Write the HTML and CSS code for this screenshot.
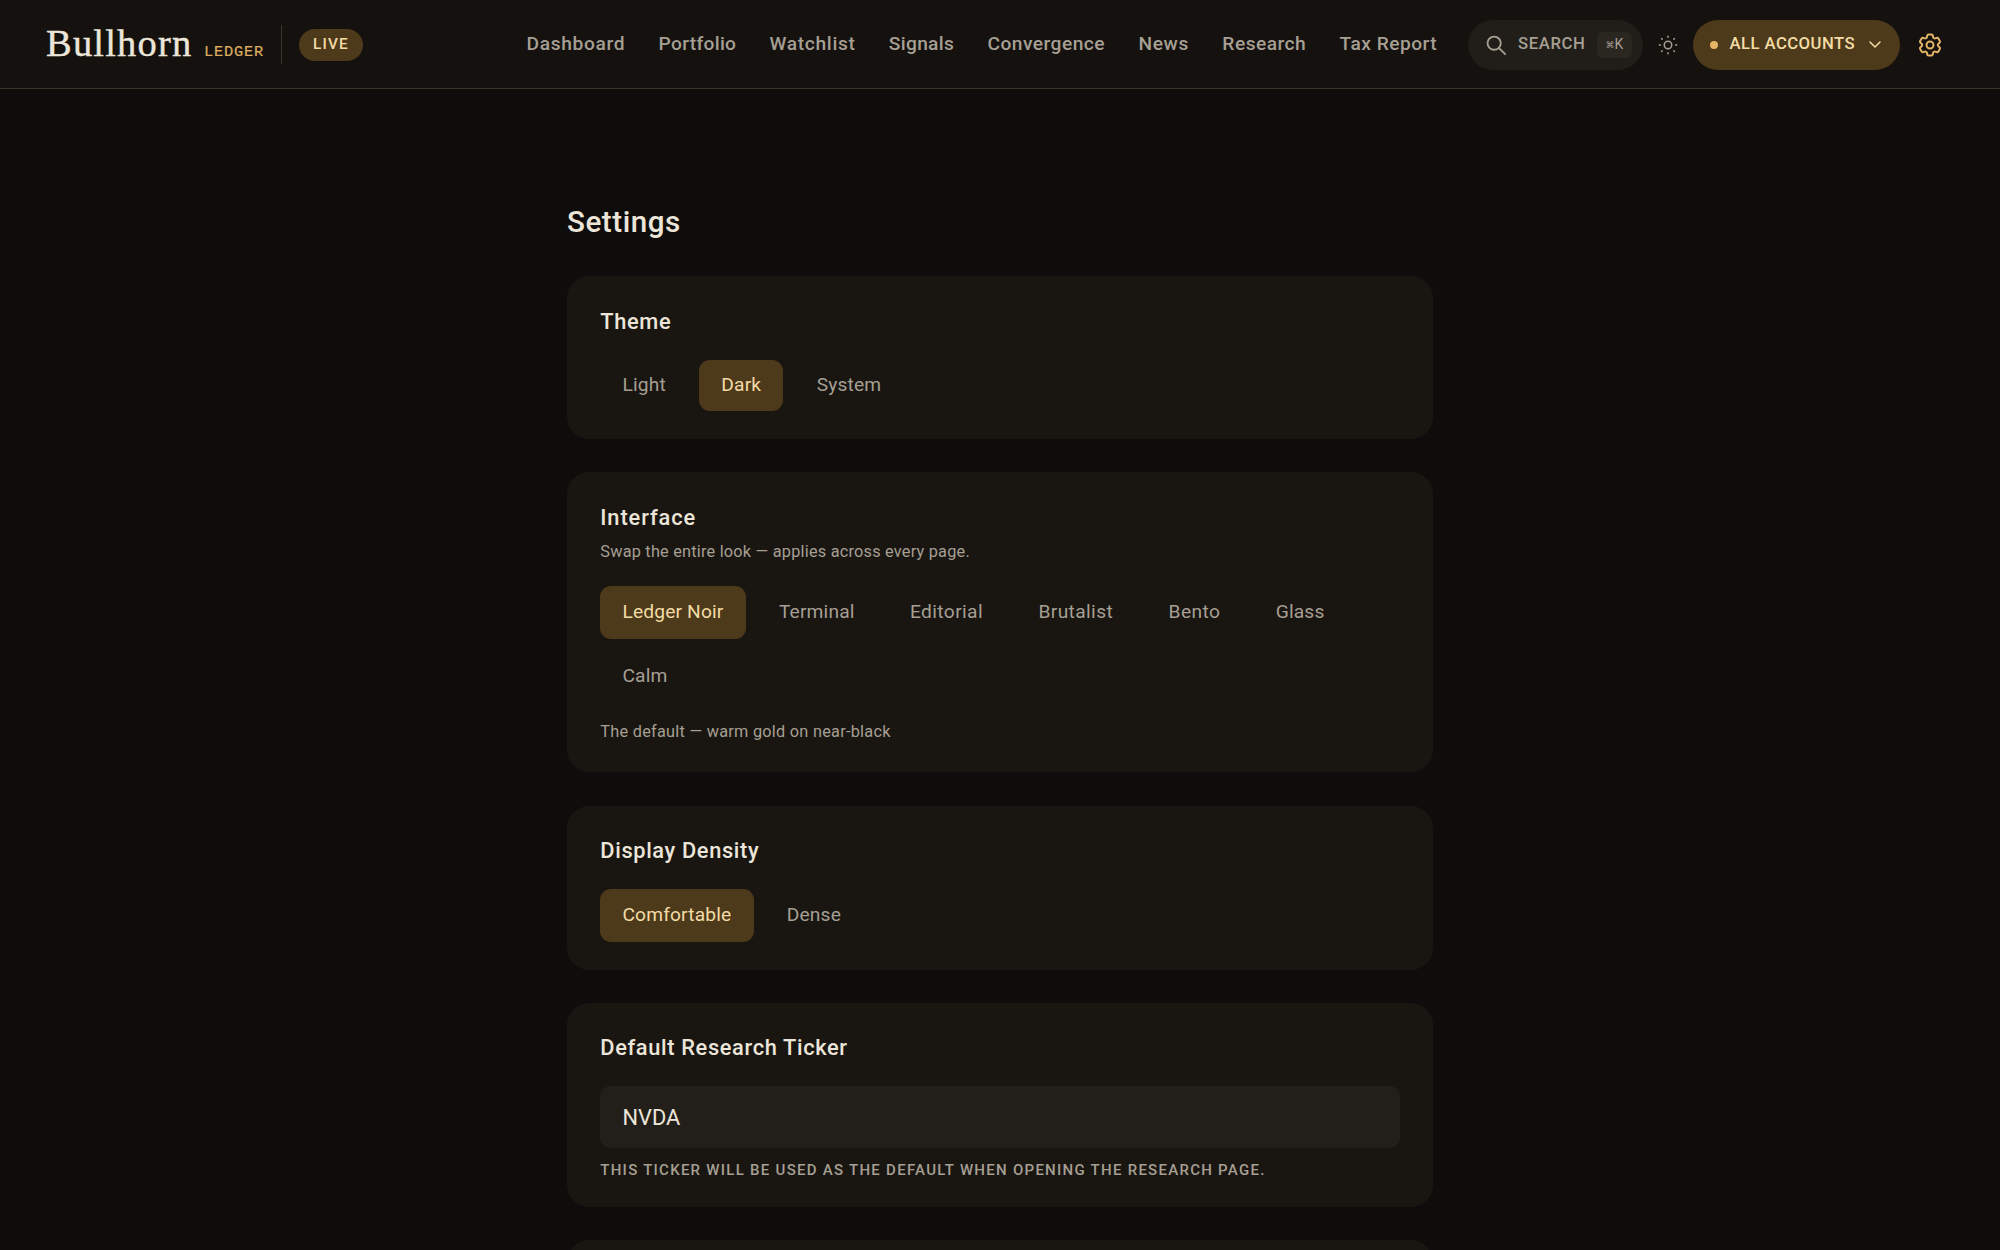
FILE: index.html
```
<!DOCTYPE html>
<html lang="en">
<head>
  <meta charset="UTF-8">
  <meta name="viewport" content="width=device-width, initial-scale=1.0">
  <title>Settings - Bullhorn Ledger</title>
  <link rel="stylesheet" href="styles.css">
</head>
<body>
  <header class="topbar">
    <div class="brand">
      <span class="brand-name">Bullhorn</span>
      <span class="brand-sub">LEDGER</span>
    </div>
    <span class="divider"></span>
    <span class="live">LIVE</span>

    <nav class="nav">
      <a class="wide">Dashboard</a>
      <a>Portfolio</a>
      <a class="wide">Watchlist</a>
      <a>Signals</a>
      <a class="mid">Convergence</a>
      <a class="wide">News</a>
      <a class="mid">Research</a>
      <a class="mid">Tax Report</a>
    </nav>

    <div class="search">
      <svg class="icon-search" viewBox="0 0 24 24"><circle cx="10" cy="10" r="7.2"/><path d="M15.3 15.3L22 22"/></svg>
      <span class="search-label">SEARCH</span>
      <kbd><span class="cmd">⌘</span>K</kbd>
    </div>

    <svg class="icon-sun" viewBox="0 0 24 24"><circle cx="12" cy="12" r="4.5"/><path d="M12 1.6v1.2M12 21.2v1.2M1.6 12h1.2M21.2 12h1.2M4.3 4.3l.7.7M19 19l.7.7M4.3 19.7l.7-.7M19 5l.7-.7"/></svg>

    <div class="accounts">
      <span class="dot"></span>
      <span class="accounts-label">ALL ACCOUNTS</span>
      <svg class="icon-chevron" viewBox="0 0 12 7"><path d="M1 1l5 5 5-5"/></svg>
    </div>

    <!-- six-tooth cog -->
    <svg class="icon-gear" viewBox="0 0 24 24"><path d="M9.594 3.94c.09-.542.56-.94 1.11-.94h2.593c.55 0 1.02.398 1.11.94l.213 1.281c.063.374.313.686.645.87.074.04.147.083.22.127.325.196.72.257 1.075.124l1.217-.456a1.125 1.125 0 0 1 1.37.49l1.296 2.247a1.125 1.125 0 0 1-.26 1.431l-1.003.827c-.293.241-.438.613-.43.992a7.723 7.723 0 0 1 0 .255c-.008.378.137.75.43.991l1.004.827c.424.35.534.955.26 1.43l-1.298 2.247a1.125 1.125 0 0 1-1.369.491l-1.217-.456c-.355-.133-.75-.072-1.076.124a6.47 6.47 0 0 1-.22.128c-.331.183-.581.495-.644.869l-.213 1.281c-.09.543-.56.94-1.11.94h-2.594c-.55 0-1.019-.398-1.11-.94l-.213-1.281c-.062-.374-.312-.686-.644-.87a6.52 6.52 0 0 1-.22-.127c-.325-.196-.72-.257-1.076-.124l-1.217.456a1.125 1.125 0 0 1-1.369-.49l-1.297-2.247a1.125 1.125 0 0 1 .26-1.431l1.004-.827c.292-.24.437-.613.43-.991a6.932 6.932 0 0 1 0-.255c.007-.38-.138-.751-.43-.992l-1.004-.827a1.125 1.125 0 0 1-.26-1.43l1.297-2.247a1.125 1.125 0 0 1 1.37-.491l1.216.456c.356.133.751.072 1.076-.124.072-.044.146-.086.22-.128.332-.183.582-.495.644-.869l.214-1.28Z"/><circle cx="12" cy="12" r="3"/></svg>
  </header>

  <main class="page">
    <h1>Settings</h1>

    <section class="card card-theme">
      <h2>Theme</h2>
      <div class="options">
        <button>Light</button>
        <button class="active">Dark</button>
        <button>System</button>
      </div>
    </section>

    <section class="card card-interface">
      <h2>Interface</h2>
      <p class="hint">Swap the entire look — applies across every page.</p>
      <div class="options">
        <button class="active">Ledger Noir</button>
        <button>Terminal</button>
        <button class="wide">Editorial</button>
        <button class="wide">Brutalist</button>
        <button class="wide">Bento</button>
        <button>Glass</button>
        <button>Calm</button>
      </div>
      <p class="hint hint-after">The default — warm gold on near-black</p>
    </section>

    <section class="card card-density">
      <h2>Display Density</h2>
      <div class="options">
        <button class="active">Comfortable</button>
        <button>Dense</button>
      </div>
    </section>

    <section class="card card-ticker">
      <h2>Default Research Ticker</h2>
      <div class="field">NVDA</div>
      <p class="caption">THIS TICKER WILL BE USED AS THE DEFAULT WHEN OPENING THE RESEARCH PAGE.</p>
    </section>

    <section class="card card-next"></section>
  </main>
</body>
</html>
```
FILE: styles.css
```
* {
  box-sizing: border-box;
}

html {
  overflow: hidden;
}

body {
  margin: 0;
  height: 100vh;
  overflow: hidden;
  background: #0e0d0b;
  color: #ece5d9;
  font-family: Roboto, sans-serif;
}

svg {
  display: block;
  flex: none;
  fill: none;
  stroke: currentColor;
  stroke-linecap: round;
  stroke-linejoin: round;
}

/* top bar */
.topbar {
  display: flex;
  align-items: center;
  height: 89px;
  padding: 1px 56px 0 46px;
  background: #14110e;
  border-bottom: 1px solid #39342a;
  white-space: nowrap;
}

.brand {
  display: flex;
  align-items: baseline;
  width: 235px;
  padding-bottom: 3px;
}

.brand-name {
  width: 158px;
  font-family: "Liberation Serif", serif;
  font-size: 38.5px;
  line-height: 50px;
  letter-spacing: 1.2px;
  -webkit-text-stroke: 0.4px currentColor;
}

.brand-sub {
  font-family: "Liberation Mono", monospace;
  font-size: 15.3px;
  letter-spacing: 0.8px;
  color: #deae60;
  -webkit-text-stroke: 0.2px currentColor;
}

.divider {
  width: 1px;
  height: 39px;
  background: #38332b;
}

.live {
  width: 64px;
  height: 32px;
  margin-left: 17px;
  border-radius: 16px;
  background: #4d3a1a;
  color: #f3dca6;
  font-size: 15.3px;
  font-weight: 500;
  line-height: 31px;
  letter-spacing: 1.2px;
  text-align: center;
}

.nav {
  display: flex;
  gap: 33.3px;
  margin-left: 163.5px;
  padding-bottom: 2px;
  font-size: 19.2px;
  font-weight: 500;
  letter-spacing: 0.3px;
  color: #a69f93;
}

.nav .mid {
  letter-spacing: 0.47px;
}

.nav .wide {
  letter-spacing: 0.66px;
}

.search {
  display: flex;
  align-items: center;
  width: 175px;
  height: 50px;
  margin-left: auto;
  padding-left: 16px;
  border-radius: 25px;
  background: #211e19;
  color: #a69f93;
}

.icon-search {
  width: 22px;
  height: 22px;
  margin-left: 1px;
  stroke-width: 2;
}

.search-label {
  width: 79px;
  margin-left: 11px;
  padding-bottom: 2px;
  font-size: 16.7px;
  font-weight: 500;
  letter-spacing: 0.6px;
}

kbd {
  width: 35px;
  height: 26px;
  border-radius: 6px;
  background: #2a2620;
  font-family: Roboto, sans-serif;
  font-size: 14px;
  line-height: 25px;
  text-align: center;
}

.cmd {
  font-family: "DejaVu Sans", sans-serif;
  font-size: 9px;
  vertical-align: 1px;
}

.icon-sun {
  width: 20px;
  height: 20px;
  margin: 0 15px;
  stroke-width: 1.8;
  color: #a69f93;
}

.accounts {
  display: flex;
  align-items: center;
  width: 207px;
  height: 50px;
  padding-left: 16.5px;
  border-radius: 25px;
  background: #4d3a1a;
  color: #f3dca6;
}

.dot {
  width: 8px;
  height: 8px;
  border-radius: 50%;
  background: #e5b567;
}

.accounts-label {
  width: 139px;
  margin-left: 12px;
  padding-bottom: 2px;
  font-size: 16.7px;
  font-weight: 500;
  letter-spacing: 0.45px;
}

.icon-chevron {
  width: 12px;
  height: 7px;
  stroke-width: 1.5;
}

.icon-gear {
  width: 28px;
  height: 28px;
  margin-left: 16px;
  stroke-width: 1.7;
  color: #e5b567;
}

/* settings page */
.page {
  width: 866px;
  margin: 0 auto;
  padding-top: 112px;
}

h1 {
  height: 75.3px;
  margin: 0;
  font-size: 29.6px;
  font-weight: 500;
  line-height: 42px;
  letter-spacing: 0.55px;
}

.card {
  margin-bottom: 33.3px;
  padding: 33.3px 33.3px 0;
  border-radius: 22px;
  background: #191611;
}

.card-theme {
  height: 162.7px;
}

.card-interface {
  height: 300px;
}

.card-density {
  height: 164px;
}

.card-ticker {
  height: 204px;
}

.card-next {
  height: 160px;
}

h2 {
  height: 50px;
  margin: 0;
  font-size: 21.8px;
  font-weight: 500;
  line-height: 24px;
  letter-spacing: 0.65px;
}

.hint {
  height: 30px;
  margin: 0;
  font-size: 16.3px;
  line-height: 21px;
  letter-spacing: 0.22px;
  color: #a69f93;
}

.options {
  display: flex;
  flex-wrap: wrap;
  gap: 11.1px;
}

button {
  height: 53px;
  padding: 0 22.2px 2px;
  border: none;
  border-radius: 11px;
  background: none;
  color: #a69f93;
  font-family: inherit;
  font-size: 19.2px;
  letter-spacing: 0.15px;
}

button.wide {
  letter-spacing: 0.38px;
}

button.active {
  background: #4d3a1a;
  color: #f3dca6;
}

.card-theme button {
  height: 51.5px;
  padding-bottom: 1px;
}

.card-interface h2 {
  height: 35px;
  letter-spacing: 0.9px;
}

.card-interface .hint {
  height: 45px;
}

.card-interface .hint-after {
  margin-top: 18.5px;
  letter-spacing: 0.26px;
}

.field {
  height: 62px;
  padding: 1px 22.2px 0;
  border-radius: 11px;
  background: #221f1a;
  font-size: 21.8px;
  line-height: 62px;
}

.caption {
  margin: 12px 0 0;
  font-size: 15px;
  font-weight: 500;
  line-height: 20px;
  letter-spacing: 1.27px;
  color: #a69f93;
  white-space: nowrap;
}
```
